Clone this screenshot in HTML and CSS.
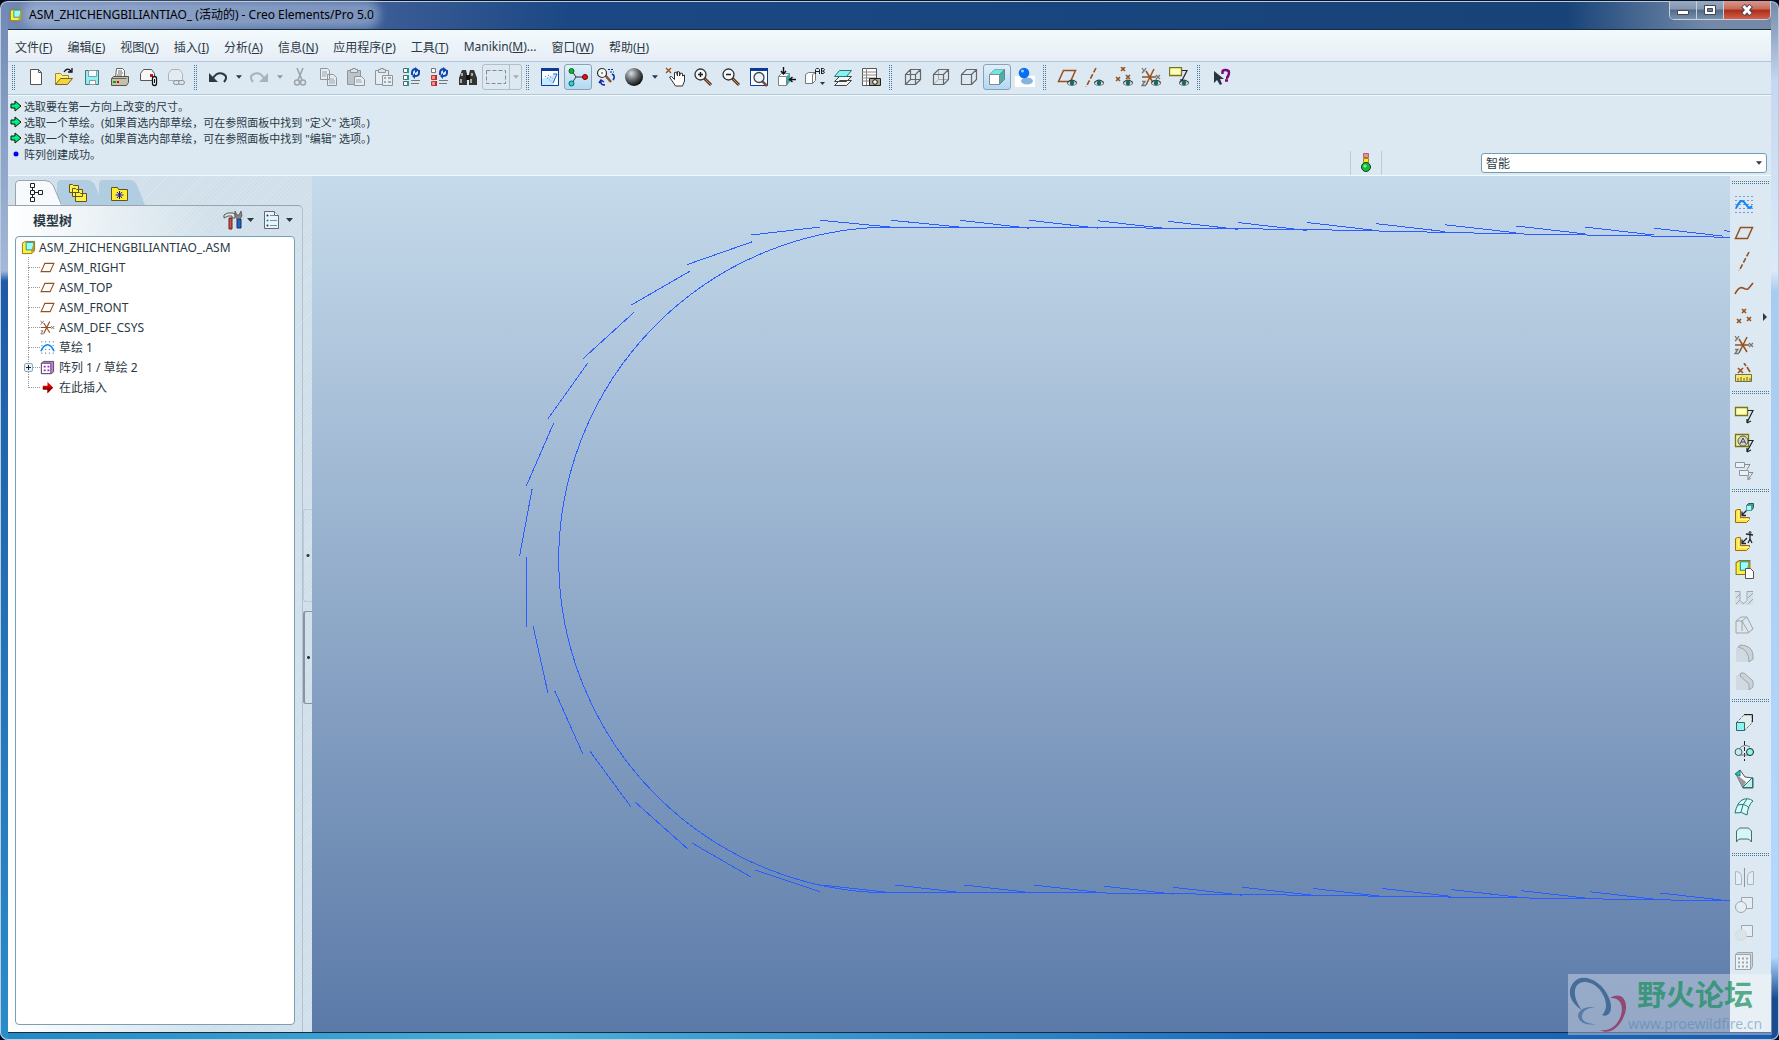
FILE: index.html
```html
<!DOCTYPE html>
<html lang="zh-CN">
<head>
  <meta charset="UTF-8" />
  <meta name="viewport" content="width=device-width, initial-scale=1.0" />
  <title>ASM_ZHICHENGBILIANTIAO_ (活动的) - Creo Elements/Pro 5.0</title>
  <link rel="stylesheet" href="styles.css">
</head>
<body>
  <!-- shared icons -->
  <svg class="sprite" aria-hidden="true">
    <symbol id="plane" viewBox="0 0 20 20"><path d="M6.500 4.500H18.500L13.500 15.500H1.500Z" fill="none" stroke="#96501e" stroke-width="1.500"/></symbol>
    <symbol id="axis" viewBox="0 0 20 20"><path d="M15 1L5 20" fill="none" stroke="#96501e" stroke-width="1.600" stroke-dasharray="5 2"/></symbol>
    <symbol id="points" viewBox="0 0 20 20"><path d="M8 2l4 4m0-4l-4 4M3 12l4 4m0-4l-4 4M13 10l4 4m0-4l-4 4" fill="none" stroke="#96501e" stroke-width="1.600"/></symbol>
    <symbol id="csys" viewBox="0 0 20 20"><path d="M1 10H15M13 2L5 18M5 4l8 13" fill="none" stroke="#96501e" stroke-width="1.500"/><path d="M1 1l2 3 2-3M3 4l-2 2M15 8l4 4m0-4l-4 4M1 14.500h3L1 18.500h4" fill="none" stroke="#777" stroke-width="1.300"/></symbol>
    <symbol id="sketch" viewBox="0 0 20 20"><path d="M1.500 1.500H19M1.500 5.500H19M1.500 9.500H19M1.500 13.500H19M1.500 17.500H19" stroke="#2048a0" stroke-dasharray="1 3"/><path d="M2 13C4 10 5 6 8 6s5 7 8 7l2-2" fill="none" stroke="#0a84ff" stroke-width="2"/></symbol>
    <symbol id="sketch-small" viewBox="0 0 16 16"><path d="M1.500 2H15M1.500 6H15M1.500 10H15M1.500 14H15" stroke="#2048a0" stroke-dasharray="1 3"/><path d="M1 12Q4 5 8 5t7 7" fill="none" stroke="#0a84ff" stroke-width="1.600"/></symbol>
    <symbol id="eye" viewBox="0 0 10 7"><path d="M0 4Q5-2 10 4Q5 8 0 4Z" fill="#e8eeee" stroke="#555" stroke-width=".8"/><circle cx="5" cy="3.500" r="2.300" fill="#08706c"/><path d="M0 3Q5-2 10 3" fill="none" stroke="#333"/></symbol>
    <symbol id="asm" viewBox="0 0 16 16"><path d="M1.500 3.500l3-2h10v10l-3 3h-10z" fill="#fff03c" stroke="#8a7420"/><path d="M5.500 2.500H13.500V10.500H5.500z" fill="#96ffff" stroke="#2a8a88"/><path d="M14 2v9l-3 3v-3z" fill="#b99c20"/></symbol>
    <symbol id="down" viewBox="0 0 7 4"><path d="M0 0H7L3.500 4Z" fill="currentColor"/></symbol>
    <symbol id="note" viewBox="0 0 20 20"><path d="M1.500 2.500h12v8h-12z" fill="#ffffb8" stroke="#77751a" stroke-width="1.300"/><path d="M14 5.500h5l-6 12M13 18v-4m0 4l4-2" fill="none" stroke="#222" stroke-width="1.200"/></symbol>
    <symbol id="base" viewBox="0 0 20 20"><path d="M1.500 7.500l2-1h3v8h9v2l-3 3h-11z" fill="#ffe53c" stroke="#a06a10"/><path d="M4.500 8v8.500h11" fill="none" stroke="#fff8b0"/><path d="M13 7l-5 5M8 8.500v4h4" fill="none" stroke="#223" stroke-width="1.300"/></symbol>
    <symbol id="glass" viewBox="0 0 20 20"><path d="M11 11l7 7" stroke="#5a3020" stroke-width="3"/><path d="M12 12l6 6" stroke="#c98b60"/><circle cx="7.500" cy="7.500" r="5.500" fill="#f4f8fa" stroke="#333" stroke-width="1.300"/></symbol>
  </svg>

  <div class="window">
    <header class="titlebar">
      <svg class="app-icon"><use href="#asm"/></svg>
      <h1 class="title"><span>ASM_ZHICHENGBILIANTIAO_ (活动的) - Creo Elements/Pro 5.0</span></h1>
      <div class="window-controls">
        <button class="control" aria-label="最小化"><svg width="14" height="12"><path d="M1.500 6.500h11v4h-11z" fill="#fff" stroke="#445"/></svg></button>
        <button class="control" aria-label="最大化"><svg width="14" height="12"><path d="M1.500 1.500h11v9h-11z" fill="#fff" stroke="#445"/><path d="M4.500 4.500h5v3h-5z" fill="#68809a" stroke="#445"/></svg></button>
        <button class="control control-close" aria-label="关闭"><svg width="14" height="12"><path d="M3 1.500l8 9M11 1.500l-8 9" stroke="#445" stroke-width="5"/><path d="M3.500 2l7 8M10.500 2l-7 8" stroke="#fff" stroke-width="3"/></svg></button>
      </div>
    </header>

    <div class="client">
      <nav class="menubar">
        <button>文件(<u>F</u>)</button>
        <button>编辑(<u>E</u>)</button>
        <button>视图(<u>V</u>)</button>
        <button>插入(<u>I</u>)</button>
        <button>分析(<u>A</u>)</button>
        <button>信息(<u>N</u>)</button>
        <button>应用程序(<u>P</u>)</button>
        <button>工具(<u>T</u>)</button>
        <button>Manikin(<u>M</u>)...</button>
        <button>窗口(<u>W</u>)</button>
        <button>帮助(<u>H</u>)</button>
      </nav>

      <div class="toolbar">
        <span class="grip"></span>
        <button class="tool" aria-label="新建"><svg viewBox="0 0 20 20"><path d="M4.500 2.500h8l3 3v12h-11z" fill="#fff" stroke="#555"/><path d="M12.500 2.500v3h3" fill="none" stroke="#555"/></svg></button>
        <button class="tool" aria-label="打开"><svg viewBox="0 0 20 20"><path d="M1.500 17.500v-11h5l2 2h6v3" fill="#ffee70" stroke="#a8882a"/><path d="M1.500 17.500l5-6h12l-5 6z" fill="#f2d440" stroke="#7a6518"/><path d="M10 5Q13 0 17 4M18 1v4h-4" fill="none" stroke="#111" stroke-width="1.300"/></svg></button>
        <button class="tool" aria-label="保存"><svg viewBox="0 0 20 20"><path d="M3.500 3.500h13v14h-13z" fill="#8ef2f4" stroke="#47717b"/><path d="M6.500 3.500h8v6h-8zM7.500 13.500h6v4h-6z" fill="#f8fbfc" stroke="#8a9ca2"/></svg></button>
        <button class="tool" aria-label="打印"><svg viewBox="0 0 20 20"><path d="M5.500 10.500l1-9h6l2 2v7z" fill="#fff" stroke="#666"/><path d="M8 4h4M8 6h5M7 8h5" stroke="#666"/><path d="M1.500 11.500l2-2h15v6l-2 3h-15z" fill="#c4c0aa" stroke="#55534a"/><path d="M3 14h3v2H3z" fill="#0a0"/><path d="M7 14h2v2H7z" fill="#d00"/><path d="M1.500 11.500h15" stroke="#666"/></svg></button>
        <button class="tool" aria-label="发送"><svg viewBox="0 0 20 20"><path d="M2.500 13.500v-7l3-4h8l3 4v7z" fill="#f8f8f8" stroke="#555"/><path d="M12 7h3v3h-3z" fill="#d21414"/><rect x="14.500" y="9.500" width="4" height="9" rx="2" fill="#fff" stroke="#111" stroke-width="1.300"/><path d="M16.500 12v4" stroke="#111"/></svg></button>
        <button class="tool tool-off" aria-label="发送链接"><svg viewBox="0 0 20 20"><path d="M2.500 13.500v-7l3-4h8l3 4v7z" fill="#edf1f3" stroke="#777"/><rect x="7.500" y="13.500" width="6" height="4" rx="2" fill="#ddd" stroke="#222"/><rect x="12.500" y="13.500" width="6" height="4" rx="2" fill="#ddd" stroke="#222"/></svg></button>

        <span class="grip"></span>
        <button class="tool" aria-label="撤消"><svg viewBox="0 0 20 20"><path d="M1 6v9h9z" fill="#2b3946"/><path d="M5 11Q9 5 14 6.500Q21 9 16 15" fill="none" stroke="#2b3946" stroke-width="2"/></svg></button>
        <button class="drop" aria-label="撤消列表"><svg><use href="#down"/></svg></button>
        <button class="tool tool-off" aria-label="重做"><svg viewBox="0 0 20 20"><path d="M19 6v9h-9z" fill="#67727b"/><path d="M15 11Q11 5 6 6.500Q-1 9 4 15" fill="none" stroke="#67727b" stroke-width="2"/></svg></button>
        <button class="drop tool-off" aria-label="重做列表"><svg><use href="#down"/></svg></button>
        <button class="tool tool-off" aria-label="剪切"><svg viewBox="0 0 20 20"><path d="M7 1l5 12M13 1L8 13" stroke="#555" stroke-width="1.600"/><circle cx="7" cy="15.500" r="2.500" fill="none" stroke="#555" stroke-width="1.500"/><circle cx="13" cy="15.500" r="2.500" fill="none" stroke="#555" stroke-width="1.500"/></svg></button>
        <button class="tool tool-off" aria-label="复制"><svg viewBox="0 0 20 20"><path d="M2.500 1.500h7l2 2v9h-9zM9.500 7.500h6l3 3v8h-9z" fill="#f0f3f5" stroke="#333"/><path d="M4 5h5M4 7h5M4 9h4M11 12h5M11 14h6M11 16h6" stroke="#555"/></svg></button>
        <button class="tool tool-off" aria-label="粘贴"><svg viewBox="0 0 20 20"><path d="M1.500 3.500h13v14h-13z" fill="#999" stroke="#333"/><path d="M4.500 5.500v-3h2v-1h3v1h2v3z" fill="#ddd" stroke="#333"/><path d="M8.500 9.500h7l3 3v6h-10z" fill="#f6f6f6" stroke="#333"/><path d="M10 13h5M10 15h6" stroke="#555"/></svg></button>
        <button class="tool tool-off" aria-label="选择性粘贴"><svg viewBox="0 0 20 20"><path d="M1.500 3.500h13v14h-13z" fill="#f0f3f5" stroke="#333"/><path d="M4.500 5.500v-3h2v-1h3v1h2v3z" fill="#ddd" stroke="#333"/><path d="M8.500 8.500h10v10h-10z" fill="#f6f6f6" stroke="#333"/><path d="M10 11h2M14 11h3M10 15h2M14 15h3" stroke="#333" stroke-width="1.500"/></svg></button>
        <button class="tool" aria-label="再生"><svg viewBox="0 0 20 20"><path d="M1.500 1.500h4v4h-4zM1.500 8.500h4v4h-4zM1.500 14.500h4v4h-4z" fill="#fff" stroke="#566"/><path d="M5 1h2v5H5zM5 8h2v5H5zM5 14h2v5H5z" fill="#189a92"/><path d="M9 13.500h9M9 16.500h8" stroke="#777"/><path d="M10 8V6q0-4 4-4M17 3v3q0 3-4 3" fill="none" stroke="#1244b4" stroke-width="2"/><path d="M13 0l4 3-4 3zM13 6v6l-3-3z" fill="#1244b4"/></svg></button>
        <button class="tool" aria-label="再生管理器"><svg viewBox="0 0 20 20"><path d="M1.500 1.500h4v4h-4z" fill="#fff" stroke="#777"/><path d="M1.500 8.500h4v4h-4zM1.500 14.500h4v4h-4z" fill="#f88" stroke="#a44"/><path d="M5 8h2v5H5zM5 14h2v5H5z" fill="#c82525"/><path d="M9 13.500h9M9 16.500h8" stroke="#777"/><path d="M10 8V6q0-4 4-4M17 3v3q0 3-4 3" fill="none" stroke="#1244b4" stroke-width="2"/><path d="M13 0l4 3-4 3zM13 6v6l-3-3z" fill="#1244b4"/></svg></button>
        <button class="tool" aria-label="查找"><svg viewBox="0 0 20 20"><path d="M4 3h4l1 4v11H1v-7zM12 3h4l3 8v7h-8V7z" fill="#333"/><path d="M8 8h4v5H8z" fill="#111"/><path d="M4 6v3M3 12v4M13 12v4M14 6v3" stroke="#d4d4c4" stroke-width="1.500"/></svg></button>
        <span class="select-split">
          <button class="select-box" aria-label="选取框"><svg viewBox="0 0 20 14"><path d="M.5 .5h19v13H.5z" fill="none" stroke="#888" stroke-dasharray="4 2"/></svg></button>
          <button class="select-drop" aria-label="选取框列表"><svg><use href="#down"/></svg></button>
        </span>

        <span class="grip"></span>
        <button class="tool" aria-label="重画"><svg viewBox="0 0 20 20"><path d="M1.500 1.500h17v17h-17z" fill="#fff" stroke="#0a3c96"/><path d="M1 1h18v3H1z" fill="#0a3c96"/><path d="M2 12L17 7l-4 11H2z" fill="#c6eaff"/><path d="M5 9l7 6M8 8l5 4" fill="none" stroke="#1e5cb8" stroke-dasharray="1 2"/><path d="M13 7l4 0-4 9" fill="none" stroke="#1e5cb8"/></svg></button>
        <button class="tool tool-on" aria-label="旋转中心"><svg viewBox="0 0 20 20"><path d="M4 4l4 6h9M8 10l-4 6" fill="none" stroke="#333"/><circle cx="3.500" cy="4" r="2.500" fill="#18b418" stroke="#063"/><circle cx="17" cy="10" r="2.500" fill="#e01414" stroke="#700"/><circle cx="3.500" cy="16.500" r="2.500" fill="#2cd0d8" stroke="#066"/></svg></button>
        <button class="tool" aria-label="定向模式"><svg viewBox="0 0 20 20"><path d="M9 8l6 7" stroke="#8a5030" stroke-width="2.500"/><circle cx="6" cy="6" r="4.500" fill="#f4f8fa" stroke="#333" stroke-width="1.200"/><path d="M5 6h2" stroke="#333"/><path d="M12 2.500h6M14 5h4" stroke="#0a28a0" stroke-dasharray="2 1"/><path d="M16 7q4 2 1 6M9 18q-5 0-4-4M3 16l2-3 3 2" fill="none" stroke="#0a28a0" stroke-width="1.500"/></svg></button>
        <button class="tool" aria-label="外观库"><svg viewBox="0 0 20 20"><defs><radialGradient id="ball" cx=".35" cy=".3" r=".7"><stop offset="0" stop-color="#d8dde0"/><stop offset=".5" stop-color="#6b7074"/><stop offset="1" stop-color="#111"/></radialGradient></defs><circle cx="10" cy="10" r="9" fill="url(#ball)"/></svg></button>
        <button class="drop" aria-label="外观列表"><svg><use href="#down"/></svg></button>
        <button class="tool" aria-label="平移"><svg viewBox="0 0 20 20"><path d="M1 1l5 5M6 1L1 6" stroke="#96501e" stroke-width="1.300"/><path d="M4.500 10l2-.5 3 3V5.500l2-.5 1 4V4.500l2 .5v4l1-3 2 .5V9l2-1v6l-2 5h-7z" fill="#fff" stroke="#333"/></svg></button>
        <button class="tool" aria-label="放大"><svg viewBox="0 0 20 20"><use href="#glass"/><path d="M5 7.500h5M7.500 5v5" stroke="#222" stroke-width="1.500"/></svg></button>
        <button class="tool" aria-label="缩小"><svg viewBox="0 0 20 20"><use href="#glass"/><path d="M5 7.500h5" stroke="#222" stroke-width="1.500"/></svg></button>
        <button class="tool" aria-label="重新调整"><svg viewBox="0 0 20 20"><path d="M1.500 1.500h17v17h-17z" fill="#fff" stroke="#0a3c96"/><path d="M1 1h18v3H1z" fill="#0a3c96"/><path d="M13 14l5 5" stroke="#8a5030" stroke-width="2.500"/><circle cx="10" cy="10.500" r="5" fill="#e8f4fa" stroke="#444" stroke-width="1.300"/></svg></button>
        <button class="tool" aria-label="重定向"><svg viewBox="0 0 20 20"><path d="M1.500 9.500l3-3h8v8l-3 4h-8z" fill="#fff" stroke="#788"/><path d="M1.500 9.500h8v9" fill="none" stroke="#788"/><path d="M10 9l3-3v8l-3 4z" fill="#35aaa4"/><path d="M6.500 0v6M4 4l2.500 3L9 4M19 12.500h-6M15.500 10l-3 2.500 3 2.500" fill="none" stroke="#111" stroke-width="1.400"/></svg></button>
        <button class="tool" aria-label="已命名视图"><svg viewBox="0 0 20 20"><path d="M.5 7.500l3-2h7v8l-3 3h-7z" fill="#fff" stroke="#777"/><path d="M7.500 16V7.500L10 6" fill="none" stroke="#777"/><path d="M10.500 7V2.500l1-1h2l1 1V7M10.500 4.500h4M16.500 1v6M16.500 1.500h2l1 1-1 1.500h-2M18 4l1.500 1-1 1.500h-2" fill="none" stroke="#222"/><path d="M15 15h5l-2.500 3z" fill="#2b3946"/></svg></button>
        <button class="tool" aria-label="层"><svg viewBox="0 0 20 20"><path d="M1.500 18.500l5-5h12l-5 5zM1.500 14.500l5-5h12l-5 5z" fill="#f4f4f4" stroke="#444"/><path d="M1.500 9.500l5-6h12l-5 6z" fill="#8cf0ee" stroke="#277"/></svg></button>
        <button class="tool" aria-label="视图管理器"><svg viewBox="0 0 20 20"><path d="M1.500 1.500h14v17h-14z" fill="#fff" stroke="#555"/><path d="M1 5h14M1 8h14M1 11h14M1 14h14M5.500 1v17" stroke="#888"/><path d="M8.500 11.500h11v7h-11z" fill="#aaa68c" stroke="#222"/><circle cx="14" cy="15" r="2.300" fill="#fff" stroke="#111"/></svg></button>

        <span class="grip"></span>
        <button class="tool" aria-label="线框"><svg viewBox="0 0 20 20"><path d="M2.500 7.500h10v10h-10zM7.500 2.500h10v10h-10zM2.500 7.500l5-5M12.500 7.500l5-5M12.500 17.500l5-5M2.500 17.500l5-5" fill="none" stroke="#666" stroke-width="1.200"/></svg></button>
        <button class="tool" aria-label="隐藏线"><svg viewBox="0 0 20 20"><path d="M7.500 2.500v10h10M2.500 17.500l5-5" fill="none" stroke="#aaa"/><path d="M2.500 7.500h10v10h-10zM2.500 7.500l5-5h10v10l-5 5M12.500 7.500l5-5" fill="none" stroke="#666" stroke-width="1.200"/></svg></button>
        <button class="tool" aria-label="无隐藏线"><svg viewBox="0 0 20 20"><path d="M2.500 7.500h10v10h-10zM2.500 7.500l5-5h10v10l-5 5M12.500 7.500l5-5" fill="none" stroke="#666" stroke-width="1.200"/></svg></button>
        <button class="tool tool-on" aria-label="着色"><svg viewBox="0 0 20 20"><path d="M2.500 7.500l5-5h10l-5 5z" fill="#6ce8e4" stroke="#8aa"/><path d="M12.500 7.500l5-5v10l-5 5z" fill="#4aaeac" stroke="#688"/><path d="M2.500 7.500h10v10h-10z" fill="#fff" stroke="#888"/></svg></button>
        <button class="tool" aria-label="增强的真实感"><svg viewBox="0 0 20 20"><path d="M0 9h20v11H0z" fill="#fff"/><ellipse cx="12" cy="14" rx="6" ry="3.500" fill="#86b4dc"/><circle cx="9" cy="6" r="5.300" fill="#0a6cf0"/><circle cx="7.500" cy="4" r="1.500" fill="#9cd0ff"/></svg></button>

        <span class="grip"></span>
        <button class="tool" aria-label="平面显示"><svg viewBox="0 0 20 20"><use href="#plane" y="-1"/><use href="#eye" x="10" y="12" width="10" height="8"/></svg></button>
        <button class="tool" aria-label="轴显示"><svg viewBox="0 0 20 20"><use href="#axis" x="-4"/><use href="#eye" x="9" y="12" width="10" height="8"/></svg></button>
        <button class="tool" aria-label="点显示"><svg viewBox="0 0 20 20"><use href="#points" y="-2"/><use href="#eye" x="10" y="12" width="10" height="8"/></svg></button>
        <button class="tool" aria-label="坐标系显示"><svg viewBox="0 0 20 20"><use href="#csys"/><use href="#eye" x="10" y="12" width="10" height="8"/></svg></button>
        <button class="tool" aria-label="注释显示"><svg viewBox="0 0 20 20"><use href="#note" x="-1" y="-2"/><use href="#eye" x="10" y="12" width="10" height="8"/></svg></button>

        <span class="grip"></span>
        <button class="tool" aria-label="上下文帮助"><svg viewBox="0 0 20 20"><path d="M3 4v12l3-3 3 5 2-1-2-5h4z" fill="#2b3440"/><path d="M11.500 7V5q0-2 2.500-2t3.500 1 0 4-2.500 3M14 13.500h3" fill="none" stroke="#7a0a7a" stroke-width="2.500"/></svg></button>
      </div>

      <div class="messages">
        <ul class="message-list">
          <li><svg viewBox="0 0 12 12"><path d="M1 4h4V1l6 5-6 5V8H1z" fill="#00f078" stroke="#111"/></svg>选取要在第一方向上改变的尺寸。</li>
          <li><svg viewBox="0 0 12 12"><path d="M1 4h4V1l6 5-6 5V8H1z" fill="#00f078" stroke="#111"/></svg>选取一个草绘。(如果首选内部草绘，可在参照面板中找到 "定义" 选项。)</li>
          <li><svg viewBox="0 0 12 12"><path d="M1 4h4V1l6 5-6 5V8H1z" fill="#00f078" stroke="#111"/></svg>选取一个草绘。(如果首选内部草绘，可在参照面板中找到 "编辑" 选项。)</li>
          <li><svg viewBox="0 0 12 12"><circle cx="6" cy="6" r="2.500" fill="#0000f0"/></svg>阵列创建成功。</li>
        </ul>
        <div class="status">
          <div class="signal">
            <svg width="12" height="20"><path d="M3.500 .5h5v4h-5z" fill="#f68a8a" stroke="#a66"/><path d="M3.500 5.500h5v4h-5z" fill="#ffe818" stroke="#998a20"/><circle cx="6" cy="14" r="4.500" fill="#18b840" stroke="#064818"/><circle cx="5" cy="13" r="1.500" fill="#8af0a0"/></svg>
          </div>
          <div class="filter">
            <select aria-label="选取过滤器"><option>智能</option></select>
            <svg><use href="#down"/></svg>
          </div>
        </div>
      </div>

      <main class="workspace">
        <aside class="navigator">
          <div class="tabs">
            <button class="tab" aria-label="模型树"><svg viewBox="0 0 46 25"><path class="tab-active" d="M.5 26V4Q.5 .5 4 .5H30Q35 .5 38 5L47 26"/><path d="M15.500 3.500h4v4h-4zM15.500 10.500h4v4h-4zM15.500 17.500h4v4h-4zM23.500 10.500h4v4h-4zM17.500 7.500v3M17.500 14.500v3M19.500 12.500h4" fill="#fff" stroke="#222"/></svg></button>
            <button class="tab" aria-label="文件夹浏览器"><svg viewBox="0 0 46 25"><path class="tab-shape" d="M0 25V4Q0 0 4 0H30Q35 0 38 5L46 25"/><path d="M12.500 4.500h3l1 1h5v7h-9zM15.500 8.500h3l1 1h6v7h-10zM18.500 12.500h4l1 1h6v8h-11z" fill="#fff04a" stroke="#62551a"/></svg></button>
            <button class="tab" aria-label="收藏夹"><svg viewBox="0 0 46 25"><path class="tab-shape" d="M0 25V4Q0 0 4 0H30Q35 0 38 5L46 25"/><path d="M12.500 7.500h6l1 2h9v11h-16z" fill="#ffee30" stroke="#62551a"/><path d="M20.500 11v8M16.500 15h8M18 12l5 6M23 12l-5 6" stroke="#1414b4"/></svg></button>
          </div>
          <section class="panel">
            <div class="panel-head">
              <h2>模型树</h2>
              <button class="panel-tool" aria-label="设置"><svg class="icon" viewBox="0 0 20 20"><path d="M1 5q3-3 9-2l2 1v4h-3V6H5L1 8z" fill="#dfe8e4" stroke="#555"/><path d="M6 8h3v11H6z" fill="#d8502c" stroke="#623"/><path d="M14 9h4v9h-4z" fill="#2860c8" stroke="#136"/><path d="M12 1l2 4 2 0 2-4 1 5-2 3h-3l-2-4z" fill="#888" stroke="#444" stroke-width=".7"/></svg><svg class="caret"><use href="#down"/></svg></button>
              <button class="panel-tool" aria-label="显示"><svg class="icon" viewBox="0 0 20 20"><path d="M2.500 1.500h10l4 4v13h-14z" fill="#e6f2fc" stroke="#667"/><path d="M12.500 1.500v4h4" fill="#fff" stroke="#667"/><circle cx="5.500" cy="5.500" r="1" fill="#333"/><circle cx="5.500" cy="10.500" r="1" fill="#27c"/><circle cx="5.500" cy="15.500" r="1" fill="#333"/><path d="M8 5.500h4M8 10.500h7M8 15.500h7" stroke="#69a"/></svg><svg class="caret"><use href="#down"/></svg></button>
            </div>
            <div class="tree-box">
              <div class="tree-root"><svg><use href="#asm"/></svg>ASM_ZHICHENGBILIANTIAO_.ASM</div>
              <ul class="tree">
                <li><svg><use href="#plane"/></svg>ASM_RIGHT</li>
                <li><svg><use href="#plane"/></svg>ASM_TOP</li>
                <li><svg><use href="#plane"/></svg>ASM_FRONT</li>
                <li><svg><use href="#csys"/></svg>ASM_DEF_CSYS</li>
                <li><svg><use href="#sketch-small"/></svg>草绘 1</li>
                <li><button class="expander" aria-label="展开"><svg viewBox="0 0 7 7"><path d="M1 3.500h5M3.500 1v5" stroke="#222"/></svg></button><svg viewBox="0 0 16 16"><path d="M1.500 3.500l2-2h11v11l-2 2h-11z" fill="#c080dc" stroke="#546"/><path d="M1.500 3.500h10v11h-10z" fill="#fff" stroke="#546"/><path d="M4 6h2v2H4zM8 6h2v2H8zM4 10h2v2H4zM8 10h2v2H8z" fill="#a020d0"/></svg>阵列 1 / 草绘 2</li>
                <li><svg viewBox="0 0 16 16"><path d="M3 6h5V2l6 6-6 6v-4H3z" fill="#e00000"/><path d="M3 8h11l-6 6v-4H3z" fill="#800"/></svg>在此插入</li>
              </ul>
            </div>
          </section>
          <div class="sashes">
            <button class="sash" aria-label="调整面板"></button>
            <button class="sash sash-raised" aria-label="收起面板"></button>
          </div>
        </aside>

        <div class="scene">
          <svg class="drawing" viewBox="275 155 1250 755" preserveAspectRatio="xMinYMin slice">
            <!-- belt path -->
            <path d="M1525 209L1335 206 1145 202 970 200.500 785 200A293.500 293.500 0 0 0 787 787L970 787 1150 789 1390 792 1525 794"/>
            <!-- upper run -->
            <path d="M723 194l62 6M785 194l61 6M846 194l61 7M907 194l61 7M968 194.500l62 7M1030 195l61 7M1091 196l61 7M1152 196l61 7M1213 197l61 7M1274 198l62 7M1336 199l61 7M1397 200l61 7M1458 201l61 7M1520 203l5 1"/>
            <!-- round end -->
            <path d="M662 207L723 200M606 233L663 213M556 269L608 239M514 316L559 275M483 369L518 320M464 428L488 373M458 490L469 431M464 491V553M483 611L470 552M514 665L489 609M556 711L520 662M606 748L560 707M662 773L610 743M723 786L666 767M725 780L787 787"/>
            <!-- lower run -->
            <path d="M789 780l61 7M850 780l61 7M911 780l62 7M973 781l61 7M1034 782l61 7M1095 782l62 7M1157 783l61 7M1218 783l61 7M1279 784l62 7M1341 785l61 7M1402 786l61 7M1463 787l61 7"/>
          </svg>
        </div>

        <div class="sidebar">
          <span class="grip-row"></span>
          <button aria-label="草绘工具"><svg><use href="#sketch"/></svg></button>
          <button aria-label="平面工具"><svg><use href="#plane"/></svg></button>
          <button aria-label="轴工具"><svg><use href="#axis"/></svg></button>
          <button aria-label="曲线工具"><svg viewBox="0 0 20 20"><path d="M1 15Q5 7 9 9t5 1 5-6" fill="none" stroke="#96501e" stroke-width="1.600"/></svg></button>
          <button class="has-flyout" aria-label="点工具"><svg><use href="#points"/></svg></button>
          <button aria-label="坐标系工具"><svg><use href="#csys"/></svg></button>
          <button aria-label="分析特征"><svg viewBox="0 0 20 20"><path d="M4 5l5 5m0-5l-5 5M10 0l2 3M13 4l3 5" stroke="#96501e" stroke-width="1.600"/><path d="M1.500 11.500h16v7h-16z" fill="#f4ea6a" stroke="#777040"/><path d="M4 18v-3M7 18v-4M10 18v-3M13 18v-4M16 18v-3" stroke="#665f30"/></svg></button>
          <span class="grip-row"></span>
          <button aria-label="注释特征"><svg><use href="#note"/></svg></button>
          <button aria-label="注释传播"><svg viewBox="0 0 20 20"><path d="M1.500 1.500h13v12h-13z" fill="#f8f29a" stroke="#77751a" stroke-width="1.300"/><circle cx="9" cy="8" r="5" fill="#d8d8d0" stroke="#555"/><path d="M6 11l3-6 3 6M7 9h4" fill="none" stroke="#444"/><path d="M14 7.500h5l-6 11M13 19v-4m0 4l4-2" fill="none" stroke="#222" stroke-width="1.200"/></svg></button>
          <button class="tool-off" aria-label="注释元素"><svg viewBox="0 0 20 20"><path d="M1.500 1.500h9v5h-9zM5.500 9.500h9v5h-9z" fill="#fff" stroke="#333"/><path d="M11 3.500h5l-3 5M15 11.500h4l-5 7M14 15v4l3-2" fill="none" stroke="#222"/></svg></button>
          <span class="grip-row"></span>
          <button aria-label="装配元件"><svg viewBox="0 0 20 20"><use href="#base"/><path d="M12.500 2.500l2-2h5v4l-2 3h-5z" fill="#3aa09c" stroke="#355"/><path d="M12.500 2.500h5v5h-5z" fill="#9ff" stroke="#599"/></svg></button>
          <button aria-label="人体模型"><svg viewBox="0 0 20 20"><use href="#base"/><path d="M12 3l7 1M16 4v4l-2 4M16 8l2 4" fill="none" stroke="#222" stroke-width="1.300"/><circle cx="16" cy="1.500" r="1.500" fill="#555"/></svg></button>
          <button aria-label="创建元件"><svg viewBox="0 0 20 20"><use href="#asm" width="18" height="17"/><path d="M11.500 9.500h5l3 3v7h-8z" fill="#fff" stroke="#555"/></svg></button>
          <button class="tool-off" aria-label="孔工具"><svg viewBox="0 0 20 20"><path d="M1 4h5v14h-5zM14 4h5v14h-5zM6 15h8v3H6z" fill="#ccd4d8"/><path d="M2 17l4-4M2 11l4-4M14 17l5-5M14 11l5-5M1 4.500h5v9l3 3 1 0 3-3v-9h6" fill="none" stroke="#555"/></svg></button>
          <button class="tool-off" aria-label="拔模工具"><svg viewBox="0 0 20 20"><path d="M2 6l5-4h6l6 12-5 4H2z" fill="#e2e6e8" stroke="#555"/><path d="M2 6h6v10M8 6l5-4M8 6l7 12" fill="none" stroke="#555"/></svg></button>
          <button class="tool-off" aria-label="倒圆角工具"><svg viewBox="0 0 20 20"><path d="M2 5l4-3Q18 2 19 12v4l-4 3H2z" fill="#c4cacd"/><path d="M6 2Q18 2 19 12v4l-4 3Q15 6 4 4z" fill="#b4babd" stroke="#555"/></svg></button>
          <button class="tool-off" aria-label="倒角工具"><svg viewBox="0 0 20 20"><path d="M2 5l4-3h4l9 8v6l-4 3H2z" fill="#c4cacd"/><path d="M7 2h3l9 8v6l-4 3v-6L6 5z" fill="#b4babd" stroke="#555"/></svg></button>
          <span class="grip-row"></span>
          <button aria-label="拉伸工具"><svg viewBox="0 0 20 20"><path d="M2 10l8-8h8v8l-8 8" fill="#e2eeee" stroke="#777" stroke-dasharray="3 1"/><path d="M10 1.500h8.500V9" fill="none" stroke="#222"/><path d="M2.500 9.500h8v8h-8z" fill="#8cf4f2" stroke="#366"/></svg></button>
          <button aria-label="旋转工具"><svg viewBox="0 0 20 20"><path d="M10.500 0v20" stroke="#222" stroke-dasharray="4 2"/><path d="M5 8Q10 2 16 6M5 14h10" fill="none" stroke="#777"/><circle cx="4.500" cy="11" r="3.500" fill="#b8eeee" stroke="#555"/><circle cx="16" cy="11" r="3.500" fill="#8cf4f2" stroke="#222"/></svg></button>
          <button aria-label="扫描混合"><svg viewBox="0 0 20 20"><path d="M2 5l4-4 5 7 8 1v10H9z" fill="#f6f8f8" stroke="#555"/><path d="M2 5l10 8-3 6z" fill="#999"/><path d="M1 5l5-4v6z" fill="#2cc" stroke="#277"/><path d="M8.500 18.500l10-10v10z" fill="#bff0ee" stroke="#277"/></svg></button>
          <button aria-label="边界混合"><svg viewBox="0 0 20 20"><path d="M1 16Q3 6 8 3q6-3 11 1-5 4-6 14-5-4-12-2z" fill="#d8fafa" stroke="#277"/><path d="M4 8q7-2 11 3M13 2Q8 7 7 15" fill="none" stroke="#277"/></svg></button>
          <button aria-label="填充工具"><svg viewBox="0 0 20 20"><path d="M2.500 17V6l3-3h9l3 3v11q-2-3-4-3H6q-2 0-3.500 3z" fill="#d2f8f6" stroke="#566"/></svg></button>
          <span class="grip-row"></span>
          <button class="tool-off" aria-label="镜像工具"><svg viewBox="0 0 20 20"><path d="M1.500 4.500q6 0 6 6v7h-6zM19.500 4.500q-6 0-6 6v7h6z" fill="#eef2f6" stroke="#777"/><path d="M10.500 1v19" stroke="#333"/></svg></button>
          <button class="tool-off" aria-label="合并工具"><svg viewBox="0 0 20 20"><path d="M7.500 2.500h11v11h-11z" fill="#f2f5f7" stroke="#555"/><circle cx="7" cy="12" r="5.500" fill="#f2f5f7" stroke="#555"/></svg></button>
          <button class="tool-off" aria-label="修剪工具"><svg viewBox="0 0 20 20"><path d="M7.500 2.500h11v11h-11z" fill="#f2f5f7" stroke="#555"/><circle cx="7" cy="12" r="5.500" fill="#d8dcde" stroke="#ccc"/></svg></button>
          <button class="tool-off" aria-label="阵列工具"><svg viewBox="0 0 20 20"><path d="M1.500 3.500l2-2h15v14l-2 3h-15z" fill="#b8bec2" stroke="#555"/><path d="M1.500 3.500h15v15h-15z" fill="#fff" stroke="#555"/><path d="M4 7.500h11M4 11.500h11M4 15.500h11" stroke="#555" stroke-width="2" stroke-dasharray="2 2"/></svg></button>
        </div>
      </main>
    </div>

    <div class="watermark">
      <svg viewBox="0 0 60 60">
        <g fill-rule="evenodd">
          <path d="M6 8C14-2 34 6 41 24c5 12 0 20-7 17C44 32 34 10 18 8 5 7 3 22 14 36-1 27 0 14 6 8z" fill="#2f5f8e" fill-opacity=".8"/>
          <path d="M42 24c12-8 20 4 14 18-5 13-16 19-24 14 10 2 18-5 21-15 3-11-2-18-11-17z" fill="#91305e" fill-opacity=".8"/>
          <path d="M28 34c-9-3-18 2-18 8 1 7 10 10 18 8-8 0-15-3-14-8 1-6 7-9 14-8z" fill="#3f6a98" fill-opacity=".7"/>
        </g>
      </svg>
      <div>
        <strong>野火论坛</strong>
        <span>www.proewildfire.cn</span>
      </div>
    </div>
  </div>
</body>
</html>
```
FILE: styles.css
```css
* {
  box-sizing: border-box;
}
body {
  margin: 0;
  background: #020818;
  color: #2b3946;
  font-family: "Noto Sans", "Noto Sans CJK SC", sans-serif;
  font-size: 12px;
}
button {
  padding: 0;
  border: none;
  background: none;
  color: inherit;
  font: inherit;
}
ul {
  margin: 0;
  padding: 0;
  list-style: none;
}
svg {
  flex: none;
}
.sprite {
  position: absolute;
  width: 0;
  height: 0;
}

/* window frame */
.window {
  position: relative;
  display: flex;
  flex-direction: column;
  height: 100vh;
  padding: 0 8px 7px;
  border-top: 1px solid #0a1428;
  border-radius: 8px;
  background:
    linear-gradient(#7088b4, #a4b8d8 270px, #1e5aa8 280px, #2a8cc8) left / 8px 100% no-repeat,
    linear-gradient(#7489a8, #c4d8f0 80px, #dceaf8 270px, #a8ccf0 290px, #b4d8ff 92%, #1a4c90 96%) right / 8px 100% no-repeat,
    linear-gradient(90deg, #2288c4, #48b0d8 30%, #2070c0 70%, #1a5cb0) bottom / 100% 8px no-repeat,
    linear-gradient(90deg, #7088b4, #405f98 20%, #1b4884 32%, #174378 88%, #7489a8 96%);
  box-shadow: inset 0 0 0 1px #b8cce0;
}
.titlebar {
  display: flex;
  align-items: center;
  height: 28px;
}
.app-icon {
  width: 14px;
  height: 14px;
  margin: 0 6px 0 1px;
}
.title {
  flex: 1;
  margin: 0;
  color: #000;
  font-size: 12px;
  font-weight: normal;
  line-height: 14px;
}
.title span {
  border-radius: 8px;
  background: rgba(184, 202, 228, .5);
  box-shadow: 0 0 8px 6px rgba(184, 202, 228, .5);
}
.window-controls {
  display: flex;
  align-self: flex-start;
  border: 1px solid #c4d0dc;
  border-top: none;
  border-radius: 0 0 5px 5px;
  overflow: hidden;
}
.control {
  display: flex;
  align-items: center;
  justify-content: center;
  width: 27px;
  height: 18px;
  border-right: 1px solid #c4d0dc;
  background: linear-gradient(#98aac0, #8497b0 45%, #506a88 50%, #7890aa);
}
.control-close {
  width: 46px;
  border: none;
  background: linear-gradient(#d8988c, #c86a58 45%, #ac2c18 50%, #d0604c);
}
.client {
  display: flex;
  flex: 1;
  flex-direction: column;
  min-height: 0;
  border: 1px solid #1c2c40;
  border-width: 1px 0;
  background: #dce9f2;
}

/* menu and toolbar */
.menubar {
  display: flex;
  gap: 15px;
  height: 32px;
  padding: 2px 7px 0;
  border-bottom: 1px solid #b0c8dc;
  background: linear-gradient(#f2fafc, #e6edf6);
}
.toolbar {
  display: flex;
  padding: 2px 0 4px;
  border-bottom: 1px solid #b0c8dc;
  box-shadow: 0 1px #f4f9fc;
}
.grip {
  width: 3px;
  margin: 0 7px 0 4px;
  background:
    repeating-linear-gradient(#dce9f2 0 1px, transparent 1px 2px),
    repeating-linear-gradient(90deg, #4a7698 0 1px, transparent 1px 2px);
}
.tool {
  display: flex;
  align-items: center;
  justify-content: center;
  width: 28px;
  height: 26px;
}
.tool svg,
.sidebar svg {
  width: 20px;
  height: 20px;
}
.tool-on {
  border: 1px solid #8ba2b6;
  border-radius: 3px;
  background: linear-gradient(#e0effa, #b2d8f4);
}
.tool-off {
  opacity: .45;
}
.drop {
  width: 13px;
}
.drop svg,
.select-drop svg {
  display: block;
  width: 6px;
  height: 4px;
  margin: auto;
}
.select-split {
  display: flex;
  width: 40px;
  border: 1px solid #b4bec6;
  border-radius: 3px;
}
.select-box {
  display: flex;
  align-items: center;
  justify-content: center;
  width: 27px;
  border-right: 1px solid #b4bec6;
}
.select-box svg {
  width: 20px;
  height: 14px;
}
.select-drop {
  flex: 1;
  color: #a4aeb8;
}

/* message area */
.messages {
  display: flex;
  justify-content: space-between;
  border-bottom: 1px solid #f4f9fc;
}
.message-list {
  padding: 3px 0 13px 2px;
  font-size: 11px;
}
.message-list li {
  display: flex;
  align-items: center;
  gap: 2px;
  height: 16px;
}
.message-list svg {
  width: 12px;
  height: 12px;
}
.status {
  display: flex;
  align-items: center;
  align-self: flex-end;
  gap: 99px;
  margin-right: 4px;
}
.signal {
  padding: 2px 9px;
  border: 1px solid #bccbd6;
  border-width: 0 1px;
  line-height: 0;
}
.filter {
  position: relative;
  width: 286px;
}
.filter select {
  width: 100%;
  height: 20px;
  padding: 0 4px;
  border: 1px solid #6f9fb8;
  border-radius: 3px;
  appearance: none;
  background: #fff;
  color: #2b3946;
  font: inherit;
}
.filter svg {
  position: absolute;
  top: 8px;
  right: 5px;
  width: 6px;
  height: 4px;
}

/* workspace */
.workspace {
  display: flex;
  flex: 1;
  min-height: 0;
}
.navigator {
  display: grid;
  grid-template: auto 1fr / 1fr 9px;
  width: 304px;
  background: repeating-linear-gradient(135deg, #d0dfe9 0 2px, #d6e4ed 2px 3px);
}
.tabs {
  display: flex;
  grid-column: 1 / 3;
  padding: 4px 0 0 7px;
}
.tab {
  width: 46px;
  height: 25px;
  margin-right: -4px;
}
.tab:first-child {
  z-index: 1;
}
.tab svg {
  display: block;
  width: 46px;
  height: 25px;
}
.tab-active {
  fill: #f6fafc;
  stroke: #9aa4ac;
}
.tab-shape {
  fill: #b0cde2;
}
.panel {
  display: flex;
  flex-direction: column;
  min-height: 0;
  padding: 0 7px 7px;
  border-top: 1px solid #9aa4ac;
  border-right: 1px solid #b4c2cc;
  border-top-right-radius: 5px;
  background: linear-gradient(90deg, #fff, transparent 70%);
}
.panel-head {
  display: flex;
  align-items: center;
  height: 30px;
  padding-bottom: 2px;
}
.panel-head h2 {
  flex: 1;
  margin: 0 0 0 18px;
  font-size: 13px;
  line-height: 16px;
}
.panel-tool {
  display: flex;
  align-items: center;
  gap: 4px;
  margin-right: 8px;
}
.panel-tool:last-child {
  margin-right: 2px;
}
.panel-tool .icon {
  width: 20px;
  height: 20px;
}
.panel-tool .caret {
  width: 7px;
  height: 4px;
}
.tree-box {
  flex: 1;
  padding: 0 5px;
  border: 1px solid #76a0b8;
  border-radius: 4px;
  background: #fff;
}
.tree-root,
.tree li {
  display: flex;
  align-items: center;
  gap: 4px;
  height: 20px;
}
.tree-root {
  gap: 3px;
}
.tree-box svg {
  width: 15px;
  height: 15px;
}
.tree {
  padding-left: 7px;
}
.tree li {
  position: relative;
  padding-left: 12px;
}
.tree li::before {
  content: "";
  position: absolute;
  top: 0;
  left: 0;
  width: 11px;
  height: 10px;
  border: 1px dotted #999;
  border-width: 0 0 1px 1px;
}
.tree li:not(:last-child)::after {
  content: "";
  position: absolute;
  top: 10px;
  left: 0;
  height: 10px;
  border-left: 1px dotted #999;
}
.expander {
  position: absolute;
  z-index: 1;
  left: -4px;
  width: 9px;
  height: 9px;
  border: 1px solid #8cacc4;
  border-radius: 2px;
  background: #e6f2fa;
}
.tree-box .expander svg {
  display: block;
  width: 7px;
  height: 7px;
}
.sashes {
  display: flex;
  flex-direction: column;
  justify-content: center;
  gap: 9px;
  padding-bottom: 24px;
}
.sash {
  height: 93px;
  border: 1px solid #b4cee0;
  border-right: none;
  border-radius: 3px 0 0 3px;
  background: radial-gradient(circle, #2b3946 1px, transparent 2px);
}
.sash-raised {
  border-color: #8496a2;
  border-left-width: 2px;
}
.scene {
  flex: 1;
  min-width: 0;
  background: linear-gradient(#c5daea, #5b7aa8);
}
.drawing {
  display: block;
  width: 100%;
  height: 100%;
}
.drawing path {
  fill: none;
  stroke: #2b5cff;
  shape-rendering: crispEdges;
  vector-effect: non-scaling-stroke;
}

/* feature toolbar */
.sidebar {
  width: 41px;
  overflow: hidden;
  background: #dce9f2;
}
.sidebar button {
  position: relative;
  display: flex;
  align-items: center;
  width: 100%;
  height: 28px;
  padding: 2px 0 0 4px;
}
.grip-row {
  display: block;
  height: 3px;
  margin: 5px 1px 6px;
  background:
    repeating-linear-gradient(90deg, #dce9f2 0 1px, transparent 1px 2px),
    repeating-linear-gradient(#4a7698 0 1px, transparent 1px 2px);
}
.has-flyout::after {
  content: "";
  position: absolute;
  right: 4px;
  border: 4px solid transparent;
  border-left-color: #2b3946;
  border-right: none;
}

/* forum mark over the corner */
.watermark {
  position: absolute;
  right: 7px;
  bottom: 5px;
  display: flex;
  width: 204px;
  height: 61px;
  background: rgba(255, 255, 255, .35);
}
.watermark svg {
  width: 60px;
  height: 60px;
}
.watermark div {
  display: flex;
  flex-direction: column;
  align-items: center;
}
.watermark strong {
  color: rgba(20, 140, 90, .7);
  font-size: 29px;
  line-height: 42px;
}
.watermark span {
  color: rgba(70, 130, 180, .5);
  font-size: 14px;
  line-height: 16px;
}
```
